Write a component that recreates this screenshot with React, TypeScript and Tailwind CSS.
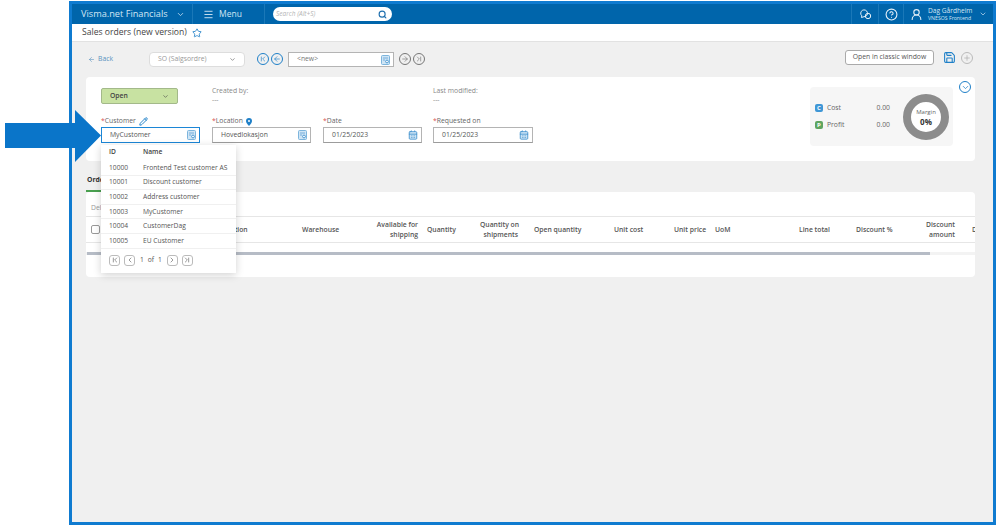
import React from 'react';
import { ArrowLeft, CalendarDays, ChevronDown, ChevronFirst, ChevronLast, ChevronLeft, ChevronRight, CircleHelp, Menu, Pencil, Plus, Save, Search, Star, UserRound } from 'lucide-react';

const customers = [
    { id: '10000', name: 'Frontend Test customer AS' },
    { id: '10001', name: 'Discount customer' },
    { id: '10002', name: 'Address customer' },
    { id: '10003', name: 'MyCustomer' },
    { id: '10004', name: 'CustomerDag' },
    { id: '10005', name: 'EU Customer' },
];

const columns = [
    { label: 'Description', className: 'w-[92px]' },
    { label: 'Warehouse', className: 'w-[58px]' },
    { label: 'Available for\nshipping', className: 'w-[58px] text-right' },
    { label: 'Quantity', className: 'w-[62px] pl-[9px]' },
    { label: 'Quantity on\nshipments', className: 'w-[38px] text-right' },
    { label: 'Open quantity', className: 'w-[96px] pl-[16px]' },
    { label: 'Unit cost', className: 'w-[60px]' },
    { label: 'Unit price', className: 'w-[41px]' },
    { label: 'UoM', className: 'w-[84px]' },
    { label: 'Line total', className: 'w-[57px]' },
    { label: 'Discount %', className: 'w-[60px]' },
    { label: 'Discount\namount', className: 'w-[39px] text-right' },
    { label: 'D', className: 'w-[20px] pl-[17px]' },
];

const LookupIcon = () => (
    <svg width="9" height="10" viewBox="0 0 9 10" className="shrink-0">
        <rect x="0.5" y="0.5" width="8" height="9" rx="1" fill="#cfe5f5" stroke="#7db5dd" />
        <path d="M2 3h5M2 5h2" stroke="#5a9fd4" strokeWidth="0.8" />
        <circle cx="6" cy="6.5" r="1.4" fill="#fff" stroke="#2f86c9" strokeWidth="0.8" />
    </svg>
);

const Field: React.FC<{ value: string; kind: 'lookup' | 'date'; active?: boolean }> = ({ value, kind, active }) => (
    <div className={`flex h-[16px] items-center justify-between pl-[8px] pr-[3px] bg-white border ${active ? 'border-[#1c86d6]' : 'border-[#b4b4b4] border-b-[#9c9c9c]'}`}>
        <span className="text-[6.8px] text-[#555]">{value}</span>
        {kind === 'lookup' ? <LookupIcon /> : <CalendarDays size={10} className="text-[#3d8fcc] fill-[#cfe5f5]" />}
    </div>
);

const Label: React.FC<{ text: string; children?: React.ReactNode }> = ({ text, children }) => (
    <div className="flex items-center gap-[3px] h-[11px] text-[6.8px] text-[#666]">
        <span><span className="text-[#d9534f]">*</span>{text}</span>
        {children}
    </div>
);

const NavCircle: React.FC<{ active?: boolean; children: React.ReactNode }> = ({ active, children }) => (
    <div className={`flex items-center justify-center w-[12px] h-[12px] rounded-full border ${active ? 'border-[#1f80c8] text-[#1f80c8]' : 'border-[#777] text-[#777]'}`}>
        {children}
    </div>
);

const PagerButton: React.FC<{ children: React.ReactNode }> = ({ children }) => (
    <div className="flex items-center justify-center w-[11px] h-[11px] rounded-[3px] border border-[#bbb] text-[#666]">
        {children}
    </div>
);

const CustomerDropdown = () => (
    <div className="absolute left-0 top-[29px] z-10 w-[135px] h-[128px] bg-white shadow-[0_2px_8px_rgba(0,0,0,0.18)] text-[6.7px] text-[#555]">
        <div className="flex items-center h-[14px] pl-[8px] font-semibold text-[#444]">
            <span className="w-[34px]">ID</span>
            <span>Name</span>
        </div>
        <div className="mt-[2px]">
            {customers.map((c) => (
                <div key={c.id} className="flex items-center h-[14.6px] pl-[8px] border-b border-[#f0f0f0] whitespace-nowrap">
                    <span className="w-[34px]">{c.id}</span>
                    <span>{c.name}</span>
                </div>
            ))}
        </div>
        <div className="flex items-center gap-[4px] pl-[8px] pt-[6px]">
            <PagerButton><ChevronFirst size={8} /></PagerButton>
            <PagerButton><ChevronLeft size={8} /></PagerButton>
            <span className="flex gap-[4px] px-[1px]"><span>1</span><span>of</span><span>1</span></span>
            <PagerButton><ChevronRight size={8} /></PagerButton>
            <PagerButton><ChevronLast size={8} /></PagerButton>
        </div>
    </div>
);

const TopBar = () => (
    <div className="flex items-center h-[20px] bg-[#0065ab] text-[#d3e6f4] shrink-0">
        <div className="flex items-center w-[121px] h-full pl-[9px] border-r border-[#1a78b8]">
            <span className="text-[9.2px] whitespace-nowrap">Visma.net Financials</span>
            <ChevronDown size={9} className="ml-[8px]" />
        </div>
        <div className="flex items-center w-[72px] h-full pl-[10px] border-r border-[#1a78b8]">
            <Menu size={11} className="mr-[5px]" />
            <span className="text-[8.5px]">Menu</span>
        </div>
        <div className="flex items-center justify-between ml-[8px] w-[119px] h-[14px] px-[3px] pr-[5px] bg-white rounded-full">
            <span className="text-[6.5px] italic text-[#b5b5b5]">Search (Alt+S)</span>
            <Search size={9} className="text-[#1f6fae]" strokeWidth={3} />
        </div>
        <div className="flex items-center ml-auto h-full">
            <div className="flex items-center justify-center w-[27px] h-full border-l border-[#1a78b8]">
                <svg width="13" height="11" viewBox="0 0 13 11" fill="none" stroke="#e6f1f9" strokeWidth="1">
                    <path d="M2.5 8.5 L2.8 6.8 A3.4 3.4 0 1 1 5 7.7 Z" />
                    <circle cx="9" cy="7" r="2.7" />
                </svg>
            </div>
            <div className="flex items-center justify-center w-[25px] h-full border-l border-[#1a78b8]">
                <CircleHelp size={13} className="text-[#e6f1f9]" />
            </div>
            <div className="flex items-center w-[90px] h-full pl-[6px] border-l border-[#1a78b8]">
                <UserRound size={13} className="text-[#e6f1f9] mr-[5px]" />
                <div className="leading-none whitespace-nowrap">
                    <div className="text-[6.6px] leading-[8px]">Dag Gårdheim</div>
                    <div className="text-[5.2px] leading-[7px]">VNESOS Frontend</div>
                </div>
                <ChevronDown size={8} className="ml-[7px]" />
            </div>
        </div>
    </div>
);

const ActionRow = () => (
    <div className="flex items-center h-[17px] text-[6.8px]">
        <div className="flex items-center w-[63px] mt-px pl-[2px] text-[#5b93bf]">
            <ArrowLeft size={7} />
            <span className="ml-[3px]">Back</span>
        </div>
        <div className="flex items-center justify-between w-[96px] h-[15px] mt-[2px] pl-[8px] pr-[8px] bg-white border border-[#ddd] rounded-[4px] text-[#999]">
            <span>SO (Salgsordre)</span>
            <ChevronDown size={7} className="text-[#555]" />
        </div>
        <div className="flex gap-[2px] ml-[12px] mt-px">
            <NavCircle active><ChevronFirst size={8} /></NavCircle>
            <NavCircle active><ArrowLeft size={8} /></NavCircle>
        </div>
        <div className="flex items-center justify-between ml-[5px] w-[106px] h-[15px] mt-[2px] pl-[8px] pr-[3px] bg-white border border-[#b4b4b4] text-[#777]">
            <span>&lt;new&gt;</span>
            <LookupIcon />
        </div>
        <div className="flex gap-[2px] ml-[5px] mt-px">
            <NavCircle><ArrowLeft size={8} className="rotate-180" /></NavCircle>
            <NavCircle><ChevronLast size={8} /></NavCircle>
        </div>
        <div className="flex items-center gap-[5px] ml-auto mr-[2px] self-start">
            <div className="flex items-center justify-center w-[89px] h-[15px] bg-white border border-[#aaa] rounded-[3px] text-[#555]">Open in classic window</div>
            <Save size={13} className="ml-[4px] text-[#1f80c8]" />
            <div className="flex items-center justify-center w-[12px] h-[12px] rounded-full border border-[#bbb] text-[#aaa]"><Plus size={8} /></div>
        </div>
    </div>
);

const MarginPanel = () => (
    <div className="flex items-center w-[143px] h-[59px] pl-[5px] rounded-[4px] bg-[#f6f6f6] text-[6.8px] text-[#666]">
        <div className="flex flex-col gap-[8px] w-[75px]">
            <div className="flex items-center h-[9px]">
                <span className="flex items-center justify-center w-[8px] h-[8px] rounded-[2px] bg-[#3f97d6] text-white text-[6px] font-bold">C</span>
                <span className="ml-[4px] w-[50px]">Cost</span>
                <span>0.00</span>
            </div>
            <div className="flex items-center h-[9px]">
                <span className="flex items-center justify-center w-[8px] h-[8px] rounded-[2px] bg-[#5fa55f] text-white text-[6px] font-bold">P</span>
                <span className="ml-[4px] w-[50px]">Profit</span>
                <span>0.00</span>
            </div>
        </div>
        <div className="flex flex-col items-center justify-center ml-[13px] w-[46px] h-[46px] rounded-full border-[8px] border-[#8c8c8c] bg-white">
            <span className="text-[6px] leading-[9px]">Margin</span>
            <span className="text-[8px] leading-[9px] font-bold text-[#333]">0%</span>
        </div>
    </div>
);

const HeaderCard = () => (
    <div className="flex mt-[10px] h-[84px] pl-[15px] pt-[10px] rounded-[4px] bg-white">
        <div className="w-[709px]">
            <div className="grid grid-cols-[111px_111px_110px_100px] h-[21px]">
                <div className="flex items-center justify-between w-[77px] h-[16px] mt-px pl-[8px] pr-[8px] rounded-[2px] bg-[#c8e2a2] border border-[#a3b98a] text-[6.8px] font-semibold text-[#444]">
                    <span>Open</span>
                    <ChevronDown size={7} />
                </div>
                <div className="text-[6.8px] text-[#888] leading-[9px] -mt-px">
                    <div>Created by:</div>
                    <div>---</div>
                </div>
                <div />
                <div className="text-[6.8px] text-[#888] leading-[9px] -mt-px">
                    <div className="whitespace-nowrap">Last modified:</div>
                    <div>---</div>
                </div>
            </div>
            <div className="grid grid-cols-[111px_111px_110px_100px] mt-[8px]">
                <div className="relative w-[99px]">
                    <Label text="Customer"><Pencil size={9} strokeWidth={2.5} className="text-[#1f80c8]" /></Label>
                    <Field value="MyCustomer" kind="lookup" active />
                    <CustomerDropdown />
                </div>
                <div className="w-[99px]">
                    <Label text="Location">
                        <svg width="6" height="8" viewBox="0 0 6 8"><path d="M3 0a3 3 0 0 1 3 3c0 2-3 5-3 5S0 5 0 3a3 3 0 0 1 3-3z" fill="#1f80c8" /><circle cx="3" cy="3" r="1" fill="#fff" /></svg>
                    </Label>
                    <Field value="Hovedlokasjon" kind="lookup" />
                </div>
                <div className="w-[99px]">
                    <Label text="Date" />
                    <Field value="01/25/2023" kind="date" />
                </div>
                <div className="w-[100px]">
                    <Label text="Requested on" />
                    <Field value="01/25/2023" kind="date" />
                </div>
            </div>
        </div>
        <MarginPanel />
        <div className="flex items-center justify-center ml-[6px] mt-[-6px] w-[12px] h-[12px] rounded-full border border-[#1f80c8] text-[#1f80c8]">
            <ChevronDown size={9} />
        </div>
    </div>
);

const OrderTable = () => (
    <div className="h-[85px] rounded-[4px] bg-white overflow-hidden">
        <div className="h-[24px] pl-[5px] pt-[11px] text-[6.8px] leading-[9px] text-[#999]">Delete</div>
        <div className="flex items-center h-[27px] border-y border-[#e6e6e6] text-[6.8px] leading-[10px] font-semibold text-[#555]">
            <div className="w-[124px] shrink-0 pl-[5px]">
                <div className="w-[9px] h-[9px] rounded-[2px] border border-[#999] bg-white" />
            </div>
            {columns.map((c) => (
                <div key={c.label} className={`shrink-0 whitespace-pre ${c.className}`}>{c.label}</div>
            ))}
        </div>
        <div className="h-[9px]" />
        <div className="flex h-[3px] bg-[#f3f3f3]">
            <div className="ml-px w-[843px] bg-[#b6bcc6]" />
        </div>
    </div>
);

export default function App() {
    return (
        <div className="relative w-[999px] h-[530px] bg-white overflow-hidden" style={{ fontFamily: '"Open Sans", sans-serif' }}>
            <div className="flex flex-col ml-[69px] mt-px w-[927px] h-[524px] border-[3px] border-[#0f7bd0] bg-[#f0f0f0]">
                <TopBar />
                <div className="flex items-center h-[18px] pl-[10px] bg-white border-b border-[#e2e2e2] shrink-0">
                    <span className="text-[8.6px] text-[#444]">Sales orders (new version)</span>
                    <Star size={10} className="ml-[5px] text-[#1f80c8]" />
                </div>
                <div className="pl-[14px] pr-[18px] pt-[8px]">
                    <ActionRow />
                    <HeaderCard />
                    <div className="flex items-end h-[31px]">
                        <div className="w-[36px] h-[22px] pt-[5px] border-b-2 border-[#4aa050] pl-px text-[6.8px] leading-[9px] font-bold text-[#333] whitespace-nowrap">Order lines</div>
                    </div>
                    <OrderTable />
                </div>
            </div>
            {/* callout arrow pointing at the customer field */}
            <svg className="absolute left-[5px] top-[110px] z-20" width="97" height="52" viewBox="0 0 97 52">
                <path d="M0 13H70V0L96 25.5 70 52V38H0Z" fill="#0a75c9" />
            </svg>
        </div>
    );
}
